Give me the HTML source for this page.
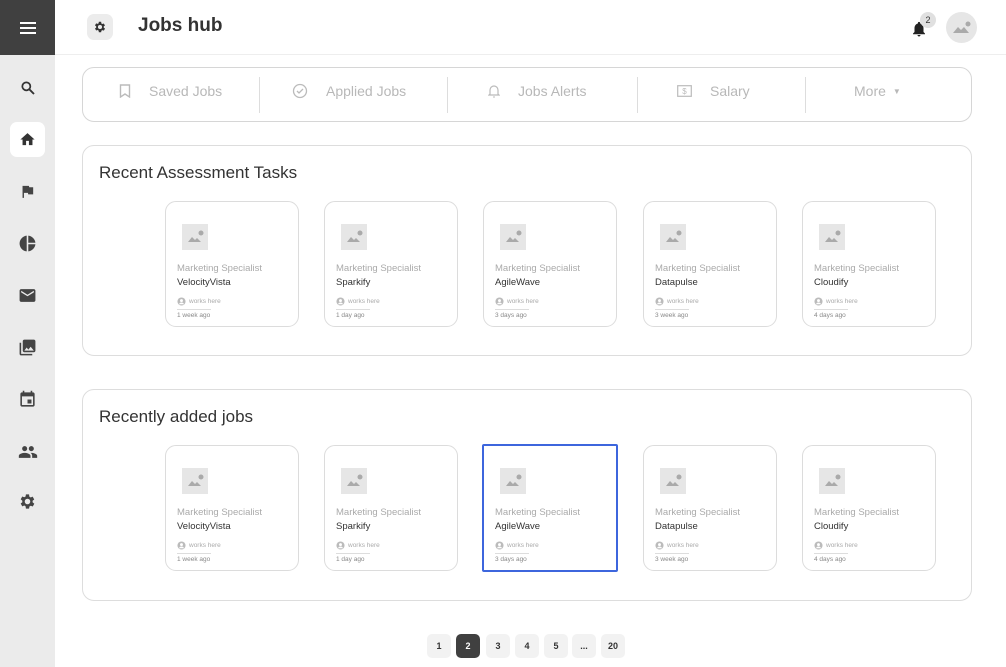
<!DOCTYPE html>
<html><head><meta charset="utf-8"><style>
*{box-sizing:border-box;margin:0;padding:0}
body{width:1006px;height:667px;overflow:hidden;background:#fff;font-family:"Liberation Sans",sans-serif;position:relative;color:#333}
.side{position:absolute;left:0;top:0;width:55px;height:667px;background:#ebebeb}
.side .top{height:55px;background:#404040;display:flex;align-items:center;justify-content:center}
.ic{position:absolute;left:10px;width:35px;height:35px;display:flex;align-items:center;justify-content:center;border-radius:7px}
.hdr{position:absolute;left:55px;top:0;right:0;height:55px;border-bottom:1px solid #eee}
.gear{position:absolute;left:32px;top:14px;width:26px;height:26px;border-radius:7px;background:#ececec;display:flex;align-items:center;justify-content:center}
.title{position:absolute;left:83px;top:15px;font-size:19px;font-weight:bold;color:#333}
.nav{position:absolute;left:82px;top:67px;width:890px;height:55px;border:1px solid #d6d6d6;border-radius:12px}
.nav .it{position:absolute;top:0;height:46px;display:flex;align-items:center;color:#b8b8b8;font-size:14px}
.nav .dv{position:absolute;top:9px;width:1px;height:36px;background:#ddd}
.sec{position:absolute;left:82px;width:890px;border:1px solid #ddd;border-radius:12px}
.sec h2{position:absolute;left:16px;font-weight:normal;font-size:17px;color:#333}
.card{position:absolute;width:134px;height:126px;border:1px solid #dcdcdc;border-radius:11px}
.card.sel{border:2px solid #3d66dd;border-radius:2px}
.ph{position:absolute;left:16px;top:22px;width:26px;height:26px;background:#e6e6e6}
.t1{position:absolute;left:11px;top:61px;font-size:9.5px;color:#aaa;white-space:nowrap}
.t2{position:absolute;left:11px;top:75px;font-size:9.5px;color:#333}
.t3{position:absolute;left:11px;top:95px;font-size:6.5px;color:#aaa;display:flex;align-items:center;gap:3px}
.ln{position:absolute;left:11px;top:107px;width:34px;height:1px;background:#ddd}
.t4{position:absolute;left:11px;top:110px;font-size:6.5px;color:#888}
.pg{position:absolute;top:634px;width:24px;height:24px;border-radius:5px;background:#f2f2f2;font-size:9px;font-weight:bold;display:flex;align-items:center;justify-content:center;color:#333}
</style></head><body>
<div class="side">
<div class="top"><svg width="16" height="12"><rect y="0" width="16" height="2" fill="#fff"/><rect y="5" width="16" height="2" fill="#fff"/><rect y="10" width="16" height="2" fill="#fff"/></svg></div>
<div class="ic" style="top:70px"><svg width="16" height="16" viewBox="0 0 24 24"><circle cx="9.5" cy="9.5" r="6" stroke="#333" stroke-width="2.6" fill="none"/><path d="M14 14l7 7" stroke="#333" stroke-width="2.8"/></svg></div>
<div class="ic" style="top:122px;background:#fff"><svg width="17" height="17" viewBox="0 0 24 24"><path d="M10 20v-6h4v6h5v-8h3L12 3 2 12h3v8z" fill="#333"/></svg></div>
<div class="ic" style="top:174px"><svg width="17" height="17" viewBox="0 0 24 24"><path d="M14.4 6L14 4H5v17h2v-7h5.6l.4 2h7V6z" fill="#444"/></svg></div>
<div class="ic" style="top:226px"><svg width="19" height="19" viewBox="0 0 24 24"><path d="M11 2v20C6 21.5 2 17.2 2 12S6 2.5 11 2zm2 0v9h9c-.5-4.7-4.3-8.5-9-9zm0 11v9c4.7-.5 8.5-4.3 9-9z" fill="#444"/></svg></div>
<div class="ic" style="top:278px"><svg width="19" height="19" viewBox="0 0 24 24"><path d="M20 4H4c-1.1 0-2 .9-2 2v12c0 1.1.9 2 2 2h16c1.1 0 2-.9 2-2V6c0-1.1-.9-2-2-2zm0 4l-8 5-8-5V6l8 5 8-5z" fill="#444"/></svg></div>
<div class="ic" style="top:330px"><svg width="19" height="19" viewBox="0 0 24 24"><path d="M22 16V4c0-1.1-.9-2-2-2H8c-1.1 0-2 .9-2 2v12c0 1.1.9 2 2 2h12c1.1 0 2-.9 2-2zm-11-4l2 2.7 3-3.7 4 5H8zM2 6v14c0 1.1.9 2 2 2h14v-2H4V6z" fill="#444"/></svg></div>
<div class="ic" style="top:382px"><svg width="19" height="19" viewBox="0 0 24 24"><path d="M17 12h-5v5h5v-5zM16 1v2H8V1H6v2H5c-1.1 0-2 .9-2 2v14c0 1.1.9 2 2 2h14c1.1 0 2-.9 2-2V5c0-1.1-.9-2-2-2h-1V1zm3 18H5V8h14z" fill="#444"/></svg></div>
<div class="ic" style="top:434px"><svg width="20" height="20" viewBox="0 0 24 24"><path d="M16 11c1.7 0 3-1.3 3-3s-1.3-3-3-3-3 1.3-3 3 1.3 3 3 3zm-8 0c1.7 0 3-1.3 3-3S9.7 5 8 5 5 6.3 5 8s1.3 3 3 3zm0 2c-2.3 0-7 1.2-7 3.5V19h14v-2.5c0-2.3-4.7-3.5-7-3.5zm8 0c-.3 0-.6 0-1 .1 1.2.8 2 2 2 3.4V19h6v-2.5c0-2.3-4.7-3.5-7-3.5z" fill="#444"/></svg></div>
<div class="ic" style="top:484px"><svg width="19" height="19" viewBox="0 0 24 24"><path d="M19.4 13a7.5 7.5 0 000-2l2.1-1.6-2-3.5-2.5 1a7.3 7.3 0 00-1.7-1L15 3h-4l-.4 2.7c-.6.3-1.2.6-1.7 1l-2.5-1-2 3.5L6.5 11a7.5 7.5 0 000 2l-2.1 1.6 2 3.5 2.5-1c.5.4 1.1.7 1.7 1L11 21h4l.4-2.7c.6-.3 1.2-.6 1.7-1l2.5 1 2-3.5zM13 15.5a3.5 3.5 0 110-7 3.5 3.5 0 010 7z" fill="#444" transform="translate(-1 0)"/></svg></div>
</div>
<div class="hdr">
<div class="gear"><svg width="14" height="14" viewBox="0 0 24 24"><path d="M19.4 13a7.5 7.5 0 000-2l2.1-1.6-2-3.5-2.5 1a7.3 7.3 0 00-1.7-1L15 3h-4l-.4 2.7c-.6.3-1.2.6-1.7 1l-2.5-1-2 3.5L6.5 11a7.5 7.5 0 000 2l-2.1 1.6 2 3.5 2.5-1c.5.4 1.1.7 1.7 1L11 21h4l.4-2.7c.6-.3 1.2-.6 1.7-1l2.5 1 2-3.5zM13 15.5a3.5 3.5 0 110-7 3.5 3.5 0 010 7z" fill="#333" transform="translate(-1 0)"/></svg></div>
<div class="title">Jobs hub</div>
<svg style="position:absolute;left:855px;top:20px" width="18" height="18" viewBox="0 0 24 24"><path d="M12 22c1.1 0 2-.9 2-2h-4c0 1.1.9 2 2 2zm6-6v-5c0-3-1.6-5.6-4.5-6.3V4a1.5 1.5 0 00-3 0v.7C7.6 5.4 6 8 6 11v5l-2 2v1h16v-1z" fill="#222"/></svg>
<div style="position:absolute;left:865px;top:12px;width:16px;height:16px;border-radius:50%;background:#e0e0e0;font-size:9px;display:flex;align-items:center;justify-content:center;color:#333">2</div>
<div style="position:absolute;left:891px;top:12px;width:31px;height:31px;border-radius:50%;background:#e6e6e6"><svg width="31" height="31" viewBox="0 0 31 31"><path d="M7 21l5-6 3 3 3-3 5 6z" fill="#aaa"/><circle cx="22" cy="12" r="2.5" fill="#aaa"/></svg></div>
</div>
<div class="nav">
<div class="it" style="left:36px"><svg width="12" height="14" viewBox="0 0 12 14"><path d="M1.5 1h9v12l-4.5-3-4.5 3z" fill="none" stroke="#bbb" stroke-width="1.4"/></svg><span style="margin-left:18px">Saved Jobs</span></div>
<div class="dv" style="left:176px"></div>
<div class="it" style="left:209px"><svg width="16" height="16" viewBox="0 0 16 16"><circle cx="8" cy="8" r="6.5" fill="none" stroke="#bbb" stroke-width="1.3"/><path d="M5 8l2 2 4-4" fill="none" stroke="#bbb" stroke-width="1.3"/></svg><span style="margin-left:18px">Applied Jobs</span></div>
<div class="dv" style="left:364px"></div>
<div class="it" style="left:405px"><svg width="12" height="14" viewBox="0 0 12 14"><path d="M2 10V6a4 4 0 018 0v4l1 1H1z" fill="none" stroke="#bbb" stroke-width="1.2"/><path d="M5 13h2" stroke="#bbb"/></svg><span style="margin-left:18px">Jobs Alerts</span></div>
<div class="dv" style="left:554px"></div>
<div class="it" style="left:594px"><svg width="15" height="12" viewBox="0 0 15 12"><rect x=".7" y=".7" width="13.6" height="10.6" fill="none" stroke="#bbb" stroke-width="1.2"/><text x="7.5" y="9" font-size="8" text-anchor="middle" fill="#bbb" font-family="Liberation Sans">$</text></svg><span style="margin-left:18px">Salary</span></div>
<div class="dv" style="left:722px"></div>
<div class="it" style="left:771px">More<span style="margin-left:7px;font-size:8px">▼</span></div>
</div>

<div class="sec" style="top:145px;height:211px"><h2 style="top:17px">Recent Assessment Tasks</h2></div>
<div class="sec" style="top:389px;height:212px"><h2 style="top:17px">Recently added jobs</h2></div>

<div id="cards"></div>
<script>
var cos=["VelocityVista","Sparkify","AgileWave","Datapulse","Cloudify"],tm=["1 week ago","1 day ago","3 days ago","3 week ago","4 days ago"],xs=[165,324,483,643,802],h="";
[201,445].forEach(function(y,r){xs.forEach(function(x,i){var s=(r==1&&i==2);h+='<div class="card'+(s?' sel':'')+'" style="left:'+(x-(s?1:0))+'px;top:'+(y-(s?1:0))+'px;'+(s?'width:136px;height:128px':'')+'"><div class="ph"><svg width="26" height="26" viewBox="0 0 26 26"><path d="M6 18l4-5 3 3 2-2 4 4z" fill="#aaa"/><circle cx="19" cy="9" r="2.5" fill="#aaa"/></svg></div><div class="t1">Marketing Specialist</div><div class="t2">'+cos[i]+'</div><div class="t3"><svg width="9" height="9" viewBox="0 0 10 10"><circle cx="5" cy="5" r="4.5" fill="#bbb"/><circle cx="5" cy="4" r="1.6" fill="#fff"/><path d="M2.2 8a3 3 0 015.6 0" fill="#fff"/></svg>works here</div><div class="ln"></div><div class="t4">'+tm[i]+'</div></div>';});});
document.getElementById("cards").innerHTML=h;
</script>
<div class="pg" style="left:427px">1</div>
<div class="pg" style="left:456px;background:#404040;color:#fff">2</div>
<div class="pg" style="left:486px">3</div>
<div class="pg" style="left:515px">4</div>
<div class="pg" style="left:544px">5</div>
<div class="pg" style="left:572px">...</div>
<div class="pg" style="left:601px">20</div>
</body></html>
